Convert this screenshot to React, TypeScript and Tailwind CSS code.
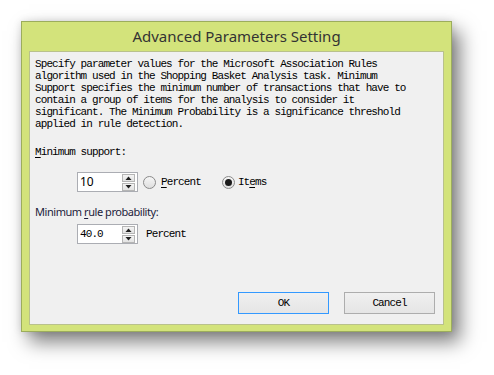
import React from "react";

const mono = { fontFamily: '"Liberation Mono", "DejaVu Sans Mono", monospace' };

function SpinBox({ value, valueMono }: { value: string; valueMono?: boolean }) {
  return (
    <div className="flex h-[20px] w-[61px] items-center border border-[#abadb3] bg-white pr-[2px]">
      <div
        className={
          valueMono
            ? "flex-1 pl-[2px] text-[11px] leading-[18px] tracking-[-0.9px] text-black"
            : "flex-1 pl-[2px] text-[12px] leading-[18px] text-black"
        }
        style={valueMono ? mono : { fontFamily: '"Noto Sans", sans-serif' }}
      >
        {value}
      </div>
      <div className="flex w-[13px] flex-col gap-[1px]">
        <div className="flex h-[8px] items-center justify-center border border-[#b5b5b5] bg-gradient-to-b from-[#f4f4f4] to-[#e3e3e3]">
          <svg width="7" height="4" viewBox="0 0 7 4">
            <path d="M0.5 4 L3.5 0.5 L6.5 4 Z" fill="#202020" />
          </svg>
        </div>
        <div className="flex h-[8px] items-center justify-center border border-[#b5b5b5] bg-gradient-to-b from-[#f4f4f4] to-[#e3e3e3]">
          <svg width="7" height="4" viewBox="0 0 7 4">
            <path d="M0.5 0 L3.5 3.5 L6.5 0 Z" fill="#202020" />
          </svg>
        </div>
      </div>
    </div>
  );
}

function Radio({ checked }: { checked?: boolean }) {
  return (
    <div className="flex h-[13px] w-[13px] items-center justify-center rounded-full border border-[#8a8a8a] bg-gradient-to-b from-[#f6f6f6] to-[#dedede]">
      {checked && <div className="h-[7px] w-[7px] rounded-full bg-[#1a1a1a]" />}
    </div>
  );
}

export default function App() {
  return (
    <div className="h-[375px] w-[494px] overflow-hidden bg-white pl-[21px] pt-[21px]">
      <div className="flex h-[311px] w-[431px] flex-col border border-[#9cad5c] bg-[#d3e37b] shadow-[8px_10px_18px_rgba(0,0,0,0.5),0_0_8px_rgba(0,0,0,0.12)]">
        <div
          className="flex h-[29px] items-center justify-center text-[15px] text-[#333333]"
          style={{ fontFamily: '"Noto Sans", "Open Sans", sans-serif' }}
        >
          Advanced Parameters Setting
        </div>
        <div className="mx-[7px] mb-[6px] flex flex-1 flex-col border border-[#b9c18c] bg-[#f0f0f0] pl-[5px]">
          <div
            className="mt-[6px] text-[11px] leading-[12px] tracking-[-0.9px] whitespace-pre text-black"
            style={mono}
          >
            {"Specify parameter values for the Microsoft Association Rules\nalgorithm used in the Shopping Basket Analysis task. Minimum\nSupport specifies the minimum number of transactions that have to\ncontain a group of items for the analysis to consider it\nsignificant. The Minimum Probability is a significance threshold\napplied in rule detection."}
          </div>
          <div
            className="mt-[16px] text-[11px] leading-[12px] tracking-[-0.9px] text-black"
            style={mono}
          >
            <span className="underline underline-offset-2">M</span>inimum support:
          </div>
          <div className="ml-[42px] mt-[14px] flex items-center">
            <SpinBox value="10" />
            <div className="ml-[5px]">
              <Radio />
            </div>
            <div
              className="ml-[5px] text-[11px] leading-[12px] tracking-[-0.9px] text-black"
              style={mono}
            >
              <span className="underline underline-offset-2">P</span>ercent
            </div>
            <div className="ml-[21px]">
              <Radio checked />
            </div>
            <div
              className="ml-[3px] text-[11px] leading-[12px] tracking-[-0.9px] text-black"
              style={mono}
            >
              It<span className="underline underline-offset-2">e</span>ms
            </div>
          </div>
          <div
            className="mt-[12px] text-[11px] leading-[16px] tracking-[-0.45px] text-[#1b1b3a]"
            style={{ fontFamily: '"Noto Sans", "Open Sans", sans-serif' }}
          >
            Minimum <span className="underline underline-offset-2">r</span>ule probability:
          </div>
          <div className="ml-[42px] mt-[4px] flex items-center">
            <SpinBox value="40.0" valueMono />
            <div
              className="ml-[8px] text-[11px] leading-[12px] tracking-[-0.9px] text-black"
              style={mono}
            >
              Percent
            </div>
          </div>
          <div className="mt-auto mb-[10px] mr-[8px] flex justify-end gap-[15px]">
            <div
              className="flex h-[22px] w-[91px] items-center justify-center border border-[#3399ff] bg-gradient-to-b from-[#f0f0f0] to-[#e5e5e5] text-[11px] tracking-[-0.9px] text-black"
              style={mono}
            >
              OK
            </div>
            <div
              className="flex h-[22px] w-[91px] items-center justify-center border border-[#adadad] bg-gradient-to-b from-[#f0f0f0] to-[#e5e5e5] text-[11px] tracking-[-0.9px] text-black"
              style={mono}
            >
              Cancel
            </div>
          </div>
        </div>
      </div>
    </div>
  );
}
